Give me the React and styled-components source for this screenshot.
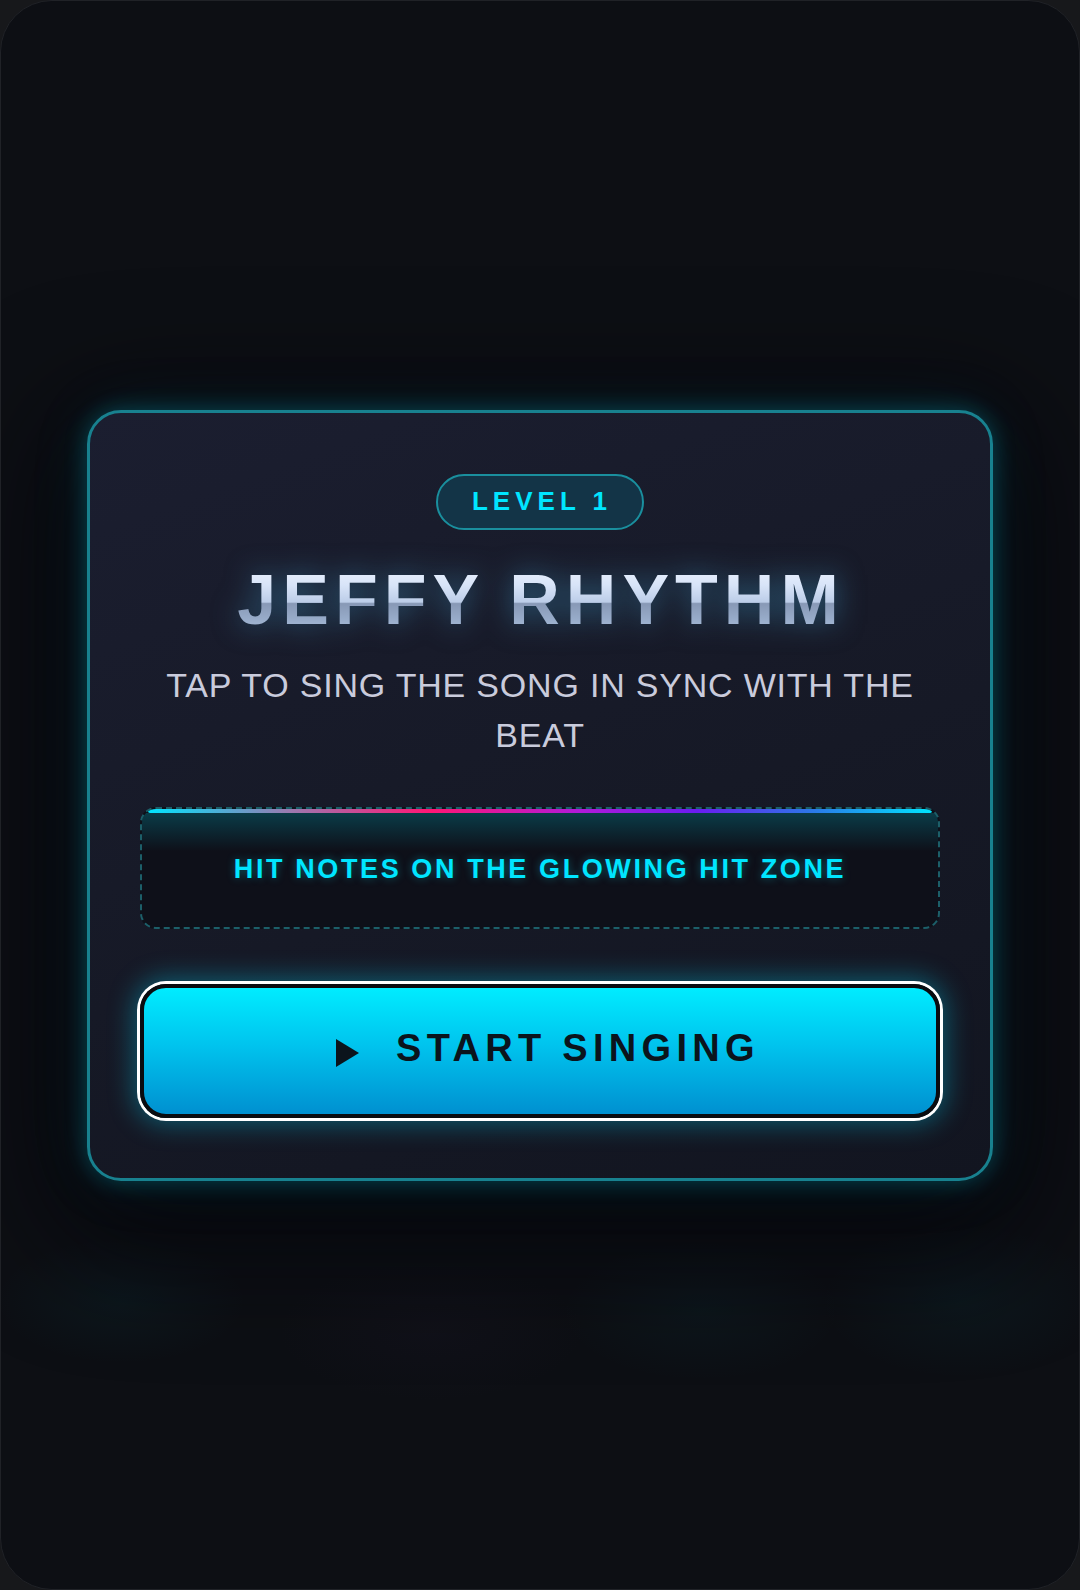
import React from "react";
import styled, { createGlobalStyle } from "styled-components";

const GlobalStyle = createGlobalStyle`
  html, body {
    margin: 0;
    padding: 0;
    background: #17181b;
  }
  * {
    box-sizing: border-box;
  }
`;

const Frame = styled.div`
  position: relative;
  width: 1080px;
  height: 1590px;
  border-radius: 52px;
  border: 1px solid #202227;
  background:
    radial-gradient(ellipse 180px 90px at 120px 1300px, rgba(0, 150, 170, 0.06), transparent 70%),
    radial-gradient(ellipse 220px 100px at 430px 1330px, rgba(60, 40, 90, 0.07), transparent 70%),
    radial-gradient(ellipse 200px 100px at 700px 1310px, rgba(0, 150, 170, 0.05), transparent 70%),
    radial-gradient(ellipse 200px 110px at 960px 1300px, rgba(0, 150, 170, 0.06), transparent 70%),
    #0d0f14;
  overflow: hidden;
  display: flex;
  align-items: center;
  justify-content: center;
  padding: 0 86px;
  font-family: "Liberation Sans", Arial, sans-serif;
`;

const Card = styled.div`
  width: 100%;
  border: 3px solid #18818f;
  border-radius: 34px;
  background: linear-gradient(160deg, #1b1e30 0%, #161926 55%, #121520 100%);
  box-shadow:
    0 0 22px rgba(0, 200, 230, 0.28),
    0 0 60px rgba(0, 170, 200, 0.12),
    0 30px 120px 30px rgba(3, 4, 10, 0.75);
  padding: 61px 50px 60px;
  display: flex;
  flex-direction: column;
  align-items: center;
`;

const Badge = styled.div`
  height: 56px;
  padding: 0 30px 0 34px;
  border-radius: 28px;
  border: 2px solid #1a8f9e;
  background: #133447;
  color: #00e5ff;
  font-weight: 700;
  font-size: 26px;
  letter-spacing: 5px;
  display: flex;
  align-items: center;
  justify-content: center;
`;

const Title = styled.h1`
  margin: 32px 0 0;
  font-size: 70px;
  line-height: 77px;
  font-weight: 700;
  letter-spacing: 6px;
  padding-left: 2px;
  background: linear-gradient(
    180deg,
    #eef4ff 0%,
    #d8e4f8 30%,
    #bccde8 52%,
    #8899b6 54%,
    #98acca 75%,
    #b8c9e4 100%
  );
  -webkit-background-clip: text;
  background-clip: text;
  color: transparent;
  filter: drop-shadow(0 0 14px rgba(70, 170, 220, 0.5));
`;

const Subtitle = styled.p`
  margin: 21px 0 0;
  font-size: 34px;
  line-height: 50px;
  letter-spacing: 0.8px;
  color: #c9cbdc;
  text-align: center;
  text-transform: uppercase;
`;

const HintBox = styled.div`
  position: relative;
  margin-top: 47px;
  width: 100%;
  height: 122px;
  border: 2px dashed #1c5f69;
  border-radius: 16px;
  background: #0e1019;
  display: flex;
  align-items: center;
  justify-content: center;
  overflow: hidden;
  padding-top: 3px;

  &::before {
    content: "";
    position: absolute;
    top: 0;
    left: 6px;
    right: 6px;
    height: 4px;
    border-radius: 2px;
    background: linear-gradient(
      90deg,
      #00e5ff 0%,
      #9a7ab0 18%,
      #ff1675 36%,
      #b01ad8 55%,
      #6a1cf0 70%,
      #2a7ae8 85%,
      #00e5ff 100%
    );
  }

  &::after {
    content: "";
    position: absolute;
    top: 4px;
    left: 0;
    right: 0;
    height: 38px;
    background: linear-gradient(180deg, rgba(0, 160, 180, 0.3), rgba(0, 160, 180, 0));
    pointer-events: none;
  }
`;

const HintText = styled.span`
  color: #00e5ff;
  font-weight: 700;
  font-size: 27px;
  letter-spacing: 2.6px;
  text-shadow: 0 0 8px rgba(0, 229, 255, 0.35);
`;

const StartButton = styled.button`
  margin-top: 55px;
  width: 100%;
  height: 134px;
  border: 4px solid #0a0c10;
  border-radius: 26px;
  background: linear-gradient(180deg, #00ecff 0%, #00c4ee 45%, #0090d0 100%);
  box-shadow:
    0 0 0 3px #ffffff,
    0 0 26px 6px rgba(0, 220, 255, 0.35);
  display: flex;
  align-items: center;
  justify-content: center;
  gap: 37px;
  color: #0b141c;
  font-family: "Liberation Sans", Arial, sans-serif;
  font-weight: 700;
  font-size: 38px;
  letter-spacing: 5.3px;
  cursor: pointer;
  padding: 0 0 4px 16px;
`;

const PlayIcon = styled.svg`
  width: 23px;
  height: 28px;
  margin-top: 8px;
  flex: none;
`;

export default function App() {
  return (
    <>
      <GlobalStyle />
      <Frame>
        <Card>
          <Badge>LEVEL 1</Badge>
          <Title>JEFFY RHYTHM</Title>
          <Subtitle>
            Tap to sing the song in sync with the
            <br />
            beat
          </Subtitle>
          <HintBox>
            <HintText>HIT NOTES ON THE GLOWING HIT ZONE</HintText>
          </HintBox>
          <StartButton>
            <PlayIcon viewBox="0 0 23 28">
              <path d="M0 0 L23 14 L0 28 Z" fill="#0b141c" />
            </PlayIcon>
            <span>START SINGING</span>
          </StartButton>
        </Card>
      </Frame>
    </>
  );
}
